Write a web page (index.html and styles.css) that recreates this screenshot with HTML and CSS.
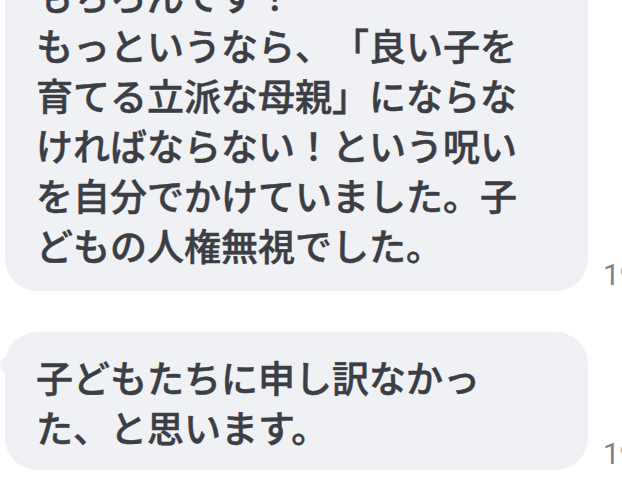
FILE: index.html
```html
<!DOCTYPE html>
<html lang="ja">
<head>
    <meta charset="UTF-8">
    <meta name="viewport" content="width=device-width, initial-scale=1.0">
    <title>Chat</title>
    <link rel="stylesheet" href="styles.css">
</head>
<body>
    <div class="chat">
        <!-- first message, scrolled partly out of view -->
        <div class="row">
            <div class="bubble">もちろんです！<br>もっというなら、「良い子を育てる立派な母親」にならなければならない！という呪いを自分でかけていました。子どもの人権無視でした。</div>
            <span class="time">19:42</span>
        </div>

        <div class="row">
            <div class="bubble tail">子どもたちに申し訳なかった、と思います。</div>
            <span class="time">19:42</span>
        </div>
    </div>
</body>
</html>
```

FILE: styles.css
```css
body {
    margin: 0;
    padding: 0;
    background: #ffffff;
    font-family: "Noto Sans CJK JP", "Noto Sans", sans-serif;
    overflow: hidden;
    height: 498px;
}

.chat {
    display: flex;
    flex-direction: column;
    gap: 41px;
    margin-top: -50px; /* list is scrolled, top of first bubble hidden */
    padding-left: 5px;
}

.row {
    display: flex;
    align-items: flex-end;
    gap: 15px;
    white-space: nowrap;
}

.bubble {
    position: relative;
    width: 490px;
    flex-shrink: 0;
    padding: 20px 62px 21px 31px;
    background: #f0f1f4;
    border-radius: 32px;
    color: #3b3e44;
    font-size: 37px;
    font-weight: 500;
    -webkit-text-stroke: 0.5px #3b3e44;
    line-height: 50px;
    white-space: normal;
    line-break: strict;
    text-spacing-trim: space-all;
}

.row + .row .bubble {
    padding-bottom: 18px;
}

/* small tail on the left of the bubble */
.bubble.tail::before {
    content: "";
    position: absolute;
    left: -5px;
    top: 25px;
    width: 14px;
    height: 16px;
    background: #f0f1f4;
    border-radius: 10px 0 0 10px;
}

.time {
    flex-shrink: 0;
    color: #7f8287;
    font-family: "Roboto", sans-serif;
    font-size: 30px;
    line-height: 32px;
}
```
